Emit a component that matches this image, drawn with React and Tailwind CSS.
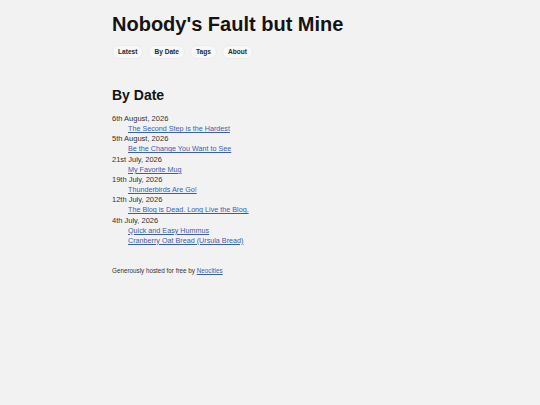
const posts = [
  { date: '6th August, 2026', links: ['The Second Step is the Hardest'] },
  { date: '5th August, 2026', links: ['Be the Change You Want to See'] },
  { date: '21st July, 2026', links: ['My Favorite Mug'] },
  { date: '19th July, 2026', links: ['Thunderbirds Are Go!'] },
  { date: '12th July, 2026', links: ['The Blog is Dead. Long Live the Blog.'] },
  { date: '4th July, 2026', links: ['Quick and Easy Hummus', 'Cranberry Oat Bread (Ursula Bread)'] },
];

const nav = ['Latest', 'By Date', 'Tags', 'About'];

export default function App() {
  return (
    <div className="min-h-[405px] bg-[#f2f2f2] text-[#333] font-['Liberation_Sans',Arial,sans-serif]">
      <div className="mx-auto w-[316px] pt-[13px]">
        <h1 className="text-[20px] font-bold leading-[22px] text-[#141414]">Nobody's Fault but Mine</h1>

        <nav className="mt-[10px] flex gap-[5px]">
          {nav.map((item) => (
            <a
              key={item}
              href="#"
              className="flex h-[14px] items-center rounded-full border border-[#ececec] bg-[#f8f8f8] px-[5px] text-[6.6px] font-bold text-[#2a2a2a]"
            >
              {item}
            </a>
          ))}
        </nav>

        <h2 className="mt-[28px] text-[14px] font-bold leading-[17px] text-[#141414]">By Date</h2>

        <ul className="mt-[10px] text-[7.5px] leading-[10.15px]">
          {posts.map((p) => (
            <li key={p.date}>
              <div>{p.date}</div>
              <ul className="pl-[16px]">
                {p.links.map((l) => (
                  <li key={l}>
                    <a href="#" className="text-[7.2px] text-[#3a5db0] underline">{l}</a>
                  </li>
                ))}
              </ul>
            </li>
          ))}
        </ul>

        <p className="mt-[20px] text-[6.3px] leading-[9px] text-[#333]">
          Generously hosted for free by <a href="#" className="text-[#3a5db0] underline">Neocities</a>
        </p>
      </div>
    </div>
  );
}
